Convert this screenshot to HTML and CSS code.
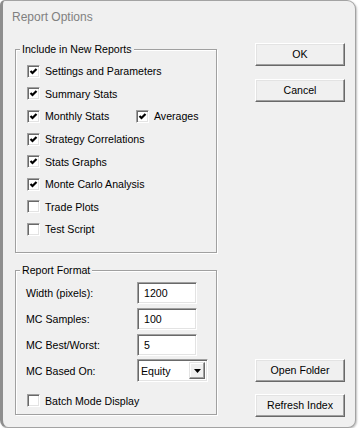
FILE: index.html
```html
<!DOCTYPE html>
<html>
<head>
    <link rel="stylesheet" href="styles.css">
</head>
<body>
<div class="window">
    <div class="titlebar">Report Options</div>
    <div class="client">
        <div class="leftCol">
            <div class="group">
                <div class="legend">Include in New Reports</div>
                <div class="checkList">
                    <div class="checkRow"><span class="check on"><svg width="13" height="13" viewBox="0 0 13 13"><polyline points="3.5,6 5.5,8 9.5,4" /></svg></span><span class="checkLabel">Settings and Parameters</span></div>
                    <div class="checkRow"><span class="check on"><svg width="13" height="13" viewBox="0 0 13 13"><polyline points="3.5,6 5.5,8 9.5,4" /></svg></span><span class="checkLabel">Summary Stats</span></div>
                    <div class="checkRow">
                        <span class="check on"><svg width="13" height="13" viewBox="0 0 13 13"><polyline points="3.5,6 5.5,8 9.5,4" /></svg></span><span class="checkLabel monthly">Monthly Stats</span>
                        <span class="check on"><svg width="13" height="13" viewBox="0 0 13 13"><polyline points="3.5,6 5.5,8 9.5,4" /></svg></span><span class="checkLabel">Averages</span>
                    </div>
                    <div class="checkRow"><span class="check on"><svg width="13" height="13" viewBox="0 0 13 13"><polyline points="3.5,6 5.5,8 9.5,4" /></svg></span><span class="checkLabel">Strategy Correlations</span></div>
                    <div class="checkRow"><span class="check on"><svg width="13" height="13" viewBox="0 0 13 13"><polyline points="3.5,6 5.5,8 9.5,4" /></svg></span><span class="checkLabel">Stats Graphs</span></div>
                    <div class="checkRow"><span class="check on"><svg width="13" height="13" viewBox="0 0 13 13"><polyline points="3.5,6 5.5,8 9.5,4" /></svg></span><span class="checkLabel">Monte Carlo Analysis</span></div>
                    <div class="checkRow"><span class="check"></span><span class="checkLabel">Trade Plots</span></div>
                    <div class="checkRow"><span class="check"></span><span class="checkLabel">Test Script</span></div>
                </div>
            </div>
            <div class="group formatGroup">
                <div class="legend">Report Format</div>
                <div class="formRows">
                    <div class="formRow"><span class="formLabel">Width (pixels):</span><span class="textBox">1200</span></div>
                    <div class="formRow"><span class="formLabel">MC Samples:</span><span class="textBox">100</span></div>
                    <div class="formRow"><span class="formLabel">MC Best/Worst:</span><span class="textBox">5</span></div>
                    <div class="formRow"><span class="formLabel">MC Based On:</span>
                        <span class="select"><span class="selectText">Equity</span><span class="selectBtn"><svg width="7" height="4" viewBox="0 0 7 4"><polygon points="0,0 7,0 3.5,4" /></svg></span></span>
                    </div>
                </div>
                <div class="checkRow batchRow"><span class="check"></span><span class="checkLabel">Batch Mode Display</span></div>
            </div>
        </div>
        <div class="rightCol">
            <div class="btnGroup">
                <div class="button">OK</div>
                <div class="button">Cancel</div>
            </div>
            <div class="btnGroup bottomBtns">
                <div class="button">Open Folder</div>
                <div class="button">Refresh Index</div>
            </div>
        </div>
    </div>
</div>
</body>
</html>
```

FILE: styles.css
```css
body {
    margin: 0;
    background-color: #ffffff;
    font-family: "Liberation Sans", Arial, sans-serif;
    font-size: 10.6px;
    color: #000;
}
.window {
    width: 356px;
    height: 428px;
    box-sizing: border-box;
    background-color: #f0f0f0;
    border: 1px solid #a3a3a3;
    border-left: 3px solid #8e8e8e;
    border-radius: 5px 9px 8px 8px;
    box-shadow: 1px 1px 2px rgba(0,0,0,0.25);
}
.titlebar {
    height: 42px;
    box-sizing: border-box;
    padding: 8px 0 0 9px;
    line-height: 16px;
    font-size: 12px;
    color: #808080;
}
.client {
    display: flex;
    gap: 38px;
    padding-left: 12px;
    height: 374px;
    box-sizing: border-box;
}
.leftCol {
    width: 202px;
    padding-top: 6px;
}
.group {
    border: 1px solid #a0a0a0;
    box-shadow: inset 1px 1px #ffffff, 1px 1px #ffffff;
    padding: 0 0 11px 11px;
}
.legend {
    width: fit-content;
    margin: -7px 0 0 -7px;
    padding: 0 2px;
    line-height: 13px;
    background-color: #f0f0f0;
}
.checkList {
    margin-top: 4px;
}
.checkRow {
    display: flex;
    align-items: center;
    height: 22.6px;
}
.check {
    width: 13px;
    height: 13px;
    box-sizing: border-box;
    flex-shrink: 0;
    background-color: #fff;
    border: 1px solid;
    border-color: #a0a0a0 #ffffff #ffffff #a0a0a0;
    box-shadow: inset 1px 1px #696969, inset -1px -1px #e3e3e3;
    position: relative;
}
.check svg {
    position: absolute;
    left: -1px;
    top: -1px;
}
.check polyline {
    fill: none;
    stroke: #000;
    stroke-width: 2.2;
}
.checkLabel {
    margin-left: 5px;
    white-space: nowrap;
}
.monthly {
    width: 91px;
}
.formatGroup {
    margin-top: 17px;
    padding-bottom: 2px;
}
.formRows {
    margin-top: 5px;
    display: flex;
    flex-direction: column;
    gap: 4px;
}
.formRow {
    display: flex;
    align-items: center;
    height: 22px;
}
.formLabel {
    width: 111px;
    margin-left: -1px;
}
.textBox {
    width: 60px;
    height: 22px;
    box-sizing: border-box;
    background-color: #fff;
    border: 1px solid;
    border-color: #a0a0a0 #ffffff #ffffff #a0a0a0;
    box-shadow: inset 1px 1px #696969, inset -1px -1px #e3e3e3;
    padding: 3px 0 0 6px;
    line-height: 14px;
}
.select {
    display: flex;
    width: 71px;
    height: 23px;
    box-sizing: border-box;
    background-color: #fff;
    border: 1px solid;
    border-color: #a0a0a0 #ffffff #ffffff #a0a0a0;
    box-shadow: inset 1px 1px #696969, inset -1px -1px #e3e3e3;
    padding: 2px;
}
.selectText {
    flex: 1;
    padding: 2px 0 0 1px;
    line-height: 14px;
}
.selectBtn {
    width: 16px;
    box-sizing: border-box;
    background-color: #f0f0f0;
    border: 1px solid;
    border-color: #e3e3e3 #696969 #696969 #e3e3e3;
    box-shadow: inset -1px -1px #a0a0a0, inset 1px 1px #ffffff;
    display: flex;
    align-items: center;
    justify-content: center;
}
.batchRow {
    margin-top: 8px;
    height: 22px;
}
.rightCol {
    width: 90px;
    display: flex;
    flex-direction: column;
    justify-content: space-between;
}
.btnGroup {
    display: flex;
    flex-direction: column;
    gap: 13px;
}
.bottomBtns {
    gap: 12px;
}
.button {
    height: 23px;
    box-sizing: border-box;
    background-color: #f0f0f0;
    border: 1px solid;
    border-color: #ffffff #696969 #696969 #ffffff;
    box-shadow: inset -1px -1px #a0a0a0, inset 1px 1px #e3e3e3;
    text-align: center;
    line-height: 20px;
}
```
